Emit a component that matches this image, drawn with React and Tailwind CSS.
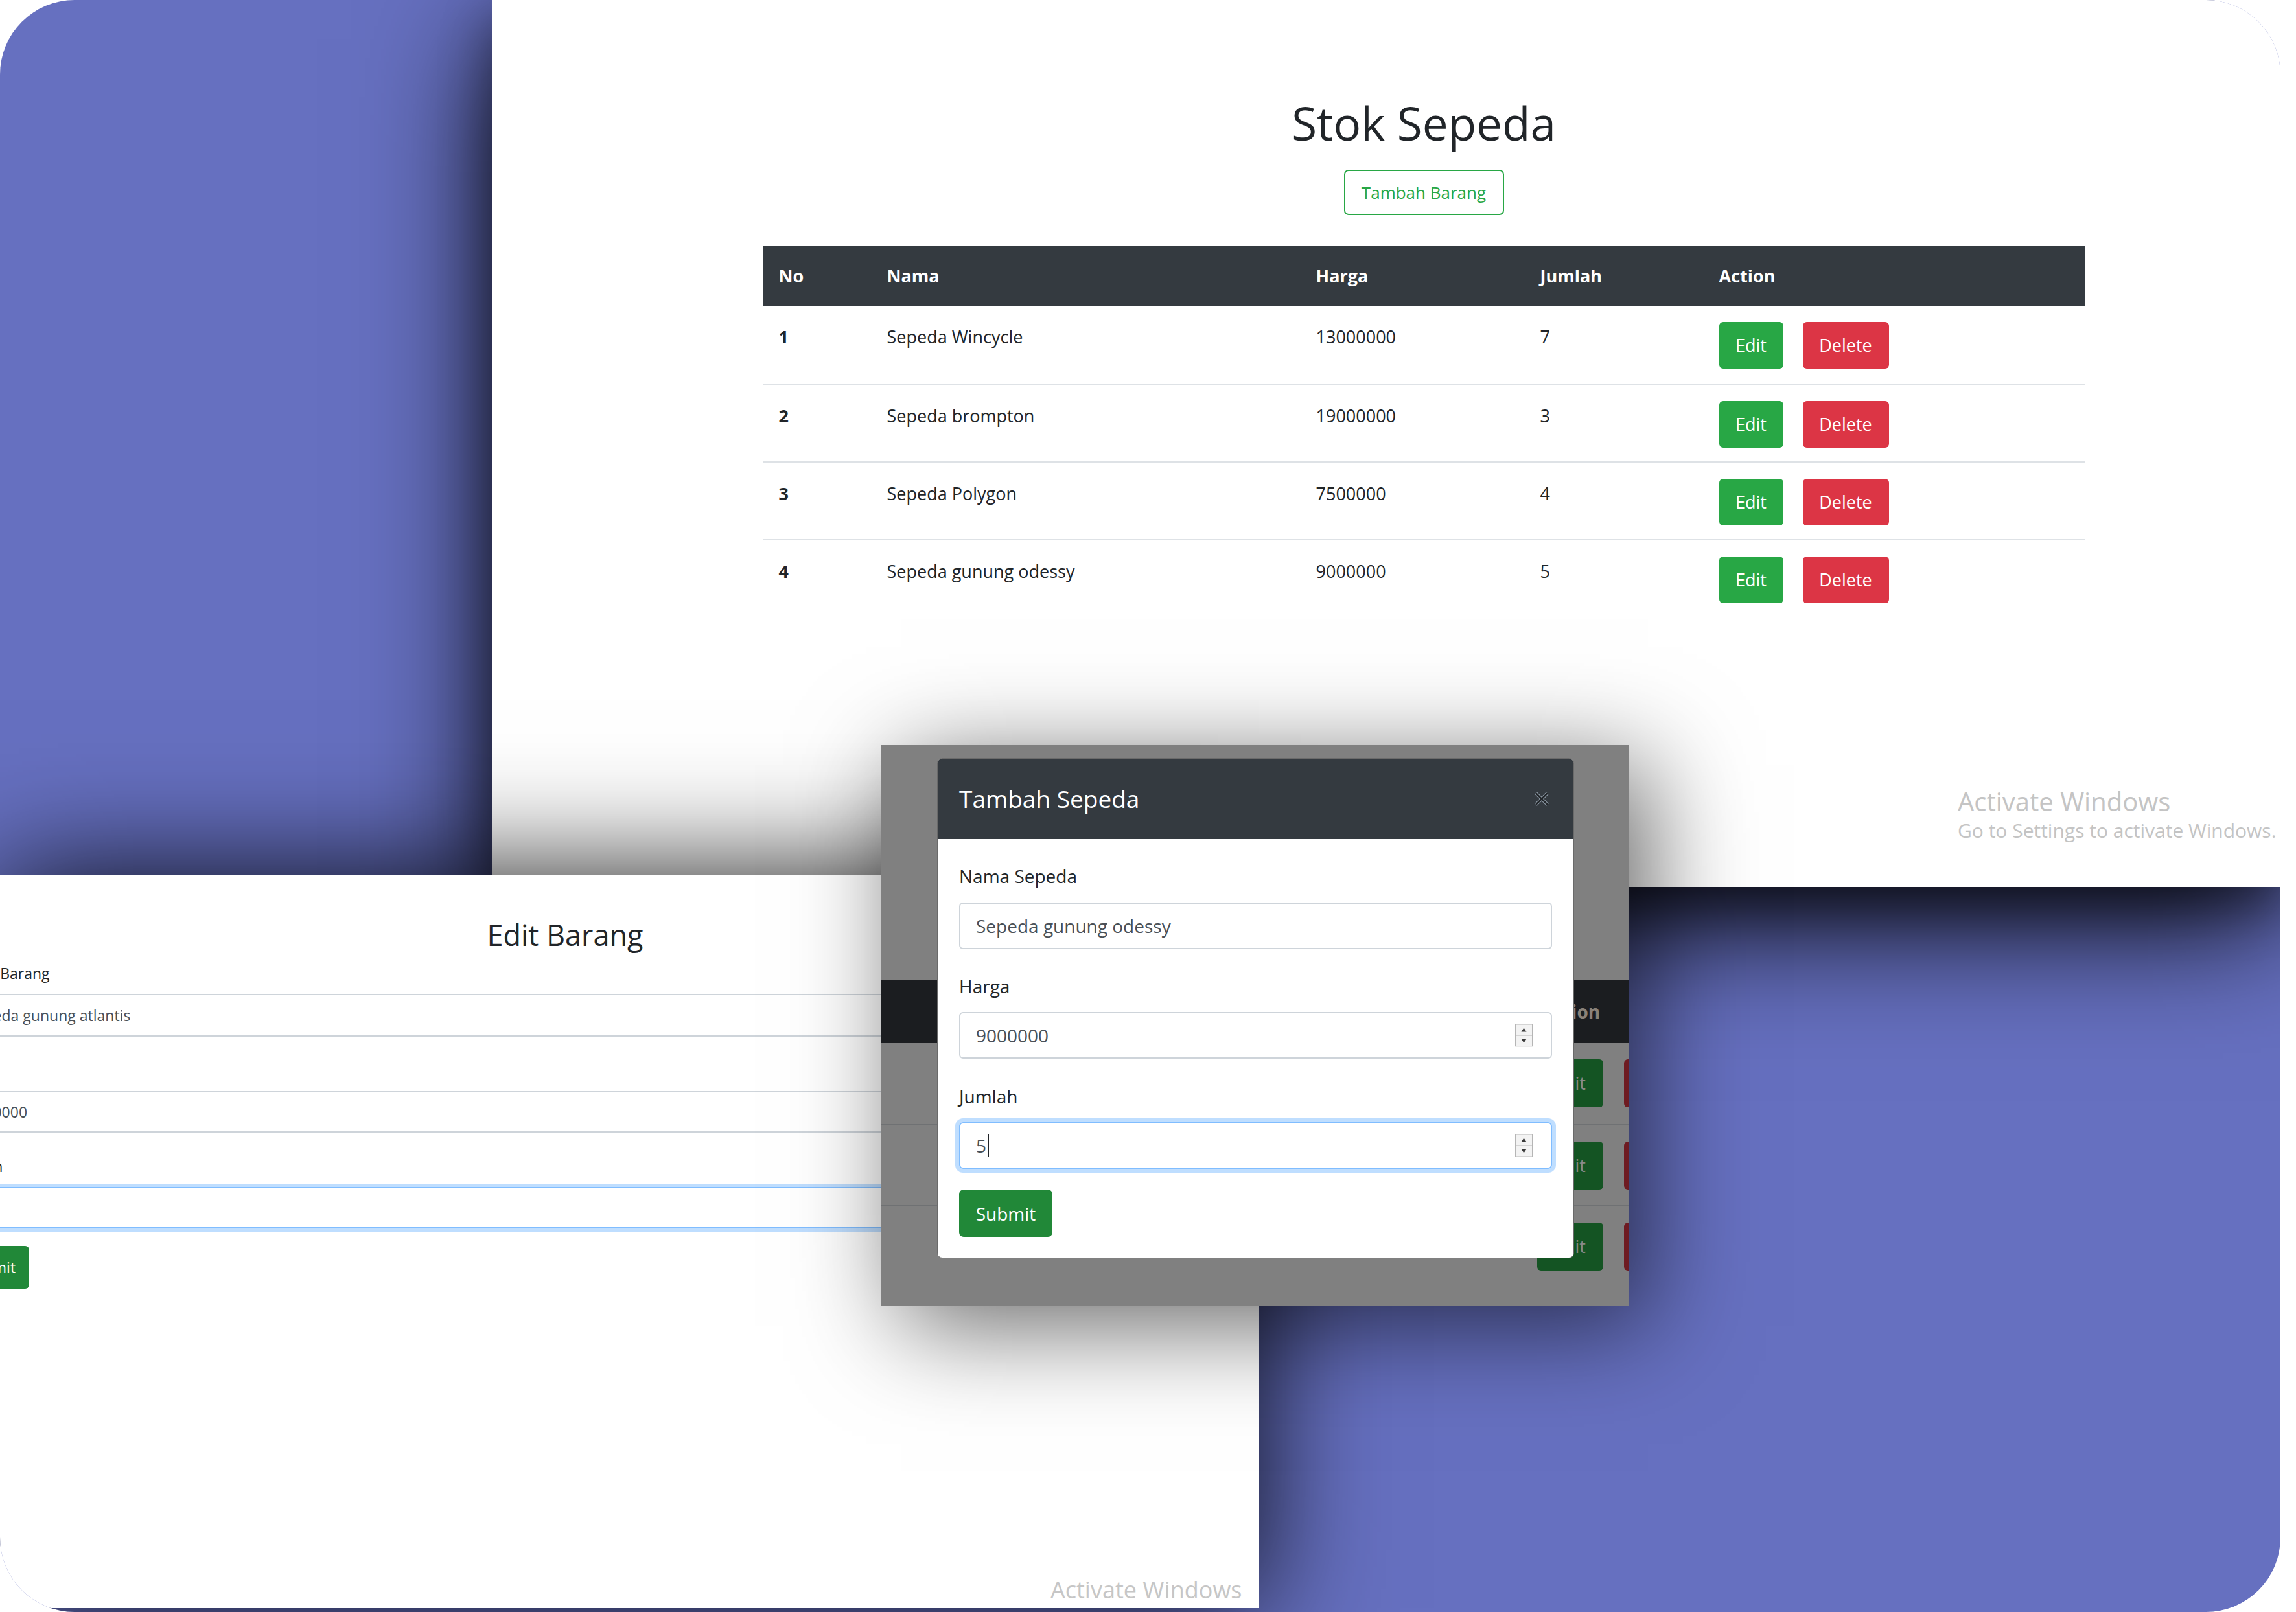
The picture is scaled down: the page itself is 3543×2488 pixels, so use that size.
import React from 'react';

const bikes = [
  { no: 1, nama: 'Sepeda Wincycle', harga: '13000000', jumlah: '7' },
  { no: 2, nama: 'Sepeda brompton', harga: '19000000', jumlah: '3' },
  { no: 3, nama: 'Sepeda Polygon', harga: '7500000', jumlah: '4' },
  { no: 4, nama: 'Sepeda gunung odessy', harga: '9000000', jumlah: '5' },
];

const cols = 'grid grid-cols-[167px_662px_346px_276px_590px]';

// little up/down arrows of a number input
const Spinner = () => (
  <svg width="27" height="35" viewBox="0 0 27 35" className="absolute right-[28px] top-1/2 -translate-y-1/2">
    <rect x="0.5" y="0.5" width="26" height="34" fill="#f3f3f3" stroke="#b5b5b5" />
    <line x1="0" y1="17.5" x2="27" y2="17.5" stroke="#b5b5b5" />
    <path d="M13.5 6 L17.5 12 L9.5 12 Z" fill="#3a3a3a" />
    <path d="M13.5 29 L17.5 23 L9.5 23 Z" fill="#3a3a3a" />
  </svg>
);

// Stok Sepeda page
const StockWindow = () => (
  <div className="absolute left-[759px] top-0 w-[2760px] h-[1369px] bg-white shadow-[0_60px_180px_rgba(0,0,0,0.95),0_30px_70px_rgba(0,0,0,0.35)]">
    <div className="flex flex-col items-center pl-[116px] pt-[147px]">
      <h1 className="text-[71px] leading-[85px] font-normal text-[#212529]">Stok Sepeda</h1>
      <div className="mt-[30px] h-[70px] w-[247px] border-2 border-[#28a745] rounded-[7px] text-[#28a745] text-[26px] flex items-center justify-center">
        Tambah Barang
      </div>
      <div className="mt-[48px] w-[2041px] text-[27px] text-[#212529]">
        <div className={`${cols} h-[92px] bg-[#343a40] text-white font-bold items-center`}>
          <div className="px-[25px]">No</div>
          <div className="px-[25px]">Nama</div>
          <div className="px-[25px]">Harga</div>
          <div className="px-[25px]">Jumlah</div>
          <div className="px-[25px]">Action</div>
        </div>
        {bikes.map((b, i) => (
          <div key={b.no} className={`${cols} h-[120px] ${i > 0 ? 'border-t-2 border-[#dee2e6]' : ''}`}>
            <div className="px-[25px] pt-[25px] leading-[46px] font-bold">{b.no}</div>
            <div className="px-[25px] pt-[25px] leading-[46px]">{b.nama}</div>
            <div className="px-[25px] pt-[25px] leading-[46px]">{b.harga}</div>
            <div className="px-[25px] pt-[25px] leading-[46px]">{b.jumlah}</div>
            <div className="px-[25px] pt-[25px] flex gap-[30px]">
              <div className="w-[99px] h-[72px] bg-[#28a745] rounded-[6px] text-white flex items-center justify-center">Edit</div>
              <div className="w-[133px] h-[72px] bg-[#dc3545] rounded-[6px] text-white flex items-center justify-center">Delete</div>
            </div>
          </div>
        ))}
      </div>
    </div>
    <div className="absolute left-[2262px] top-[1212px] text-[#c4c4c4] whitespace-nowrap">
      <div className="text-[40px] leading-[50px]">Activate Windows</div>
      <div className="text-[30px] leading-[40px]">Go to Settings to activate Windows.</div>
    </div>
  </div>
);

// Edit Barang page, cropped on the left
const EditWindow = () => (
  <div className="absolute left-0 top-[1351px] w-[1943px] h-[1131px] bg-white overflow-hidden shadow-[0_0_180px_rgba(0,0,0,0.9)]">
    <div className="ml-[-70px] w-[1884px] flex flex-col pt-[65px] text-[23px] text-[#212529]">
      <div className="text-center text-[45px] leading-[54px]">Edit Barang</div>
      <div className="mt-[16px] leading-[32px]">Nama Barang</div>
      <div className="mt-[16px] h-[66px] border-2 border-[#ced4da] rounded-[6px] pl-[18px] flex items-center text-[#495057]">
        Sepeda gunung atlantis
      </div>
      <div className="mt-[36px] leading-[32px]">Harga</div>
      <div className="mt-[16px] h-[64px] border-2 border-[#ced4da] rounded-[6px] pl-[18px] flex items-center text-[#495057]">
        9000000
      </div>
      <div className="mt-[36px] leading-[32px]">Jumlah</div>
      <div className="mt-[16px] h-[64px] border-2 border-[#80bdff] rounded-[6px] pl-[18px] flex items-center text-[#495057] shadow-[0_0_0_5px_rgba(0,123,255,0.25)]">
        5
      </div>
      <div className="mt-[27px] h-[66px] w-[115px] bg-[#218838] rounded-[6px] text-white pl-[18px] flex items-center">
        Submit
      </div>
    </div>
    <div className="absolute left-[1621px] top-[1081px] text-[36px] leading-[44px] text-[#c6c6c6] whitespace-nowrap">
      Activate Windows
    </div>
  </div>
);

const ModalInput = ({ value, spinner, focused }) => (
  <div
    className={`relative h-[72px] rounded-[6px] border-2 pl-[24px] flex items-center text-[28px] text-[#495057] ${
      focused ? 'border-[#80bdff] shadow-[0_0_0_6px_rgba(0,123,255,0.25)]' : 'border-[#ced4da]'
    }`}
  >
    <span>{value}</span>
    {focused && <span className="ml-[2px] w-[2px] h-[34px] bg-[#212529]" />}
    {spinner && <Spinner />}
  </div>
);

// Tambah Sepeda dialog over a dimmed page
const ModalWindow = () => (
  <div className="absolute left-[1360px] top-[1150px] w-[1153px] h-[866px] bg-[#808080] overflow-hidden shadow-[30px_30px_150px_rgba(0,0,0,0.6)]">
    <div className="pt-[362px]">
      <div className="h-[98px] bg-[#1b1d20] pl-[1019px] flex items-center text-[28px] font-bold text-[#8a8279]">Action</div>
      {[0, 1, 2].map((r) => (
        <div key={r} className={`h-[125px] pl-[1012px] pt-[25px] flex gap-[32px] text-[27px] text-[#8a8a8a] ${r > 0 ? 'border-t-2 border-[#6f7173]' : ''}`}>
          <div className="shrink-0 w-[102px] h-[74px] bg-[#145423] rounded-[6px] flex items-center justify-center">Edit</div>
          <div className="shrink-0 w-[133px] h-[74px] bg-[#6e1b22] rounded-[6px] flex items-center justify-center">Delete</div>
        </div>
      ))}
    </div>

    <div className="absolute left-[86px] top-[20px] w-[983px] h-[772px] bg-white rounded-[8px] overflow-hidden border border-[#6a6a6a]">
      <div className="h-[124px] bg-[#343a40] pl-[33px] pr-[36px] flex items-center justify-between">
        <span className="text-[37px] text-white">Tambah Sepeda</span>
        <svg width="26" height="24" viewBox="0 0 26 24">
          <path d="M4 3 L22 21 M22 3 L4 21" stroke="#8e9aa6" strokeWidth="5" />
          <path d="M4 3 L22 21 M22 3 L4 21" stroke="#22262a" strokeWidth="2.5" />
        </svg>
      </div>
      <div className="px-[33px] flex flex-col text-[#212529]">
        <div className="mt-[37px] text-[28px] leading-[40px]">Nama Sepeda</div>
        <div className="mt-[21px]">
          <ModalInput value="Sepeda gunung odessy" />
        </div>
        <div className="mt-[37px] text-[28px] leading-[40px]">Harga</div>
        <div className="mt-[20px]">
          <ModalInput value="9000000" spinner />
        </div>
        <div className="mt-[38px] text-[28px] leading-[40px]">Jumlah</div>
        <div className="mt-[20px]">
          <ModalInput value="5" spinner focused />
        </div>
        <div className="mt-[32px] w-[144px] h-[73px] bg-[#218838] rounded-[7px] text-white text-[28px] flex items-center justify-center">
          Submit
        </div>
      </div>
    </div>
  </div>
);

const App = () => {
  return (
    <div className="w-[3543px] h-[2488px] bg-white font-['Open_Sans',sans-serif]">
      <div className="relative w-[3519px] h-[2488px] rounded-[115px] overflow-hidden bg-[#6670c0]">
        <StockWindow />
        <EditWindow />
        <ModalWindow />
      </div>
    </div>
  );
};

export default App;
